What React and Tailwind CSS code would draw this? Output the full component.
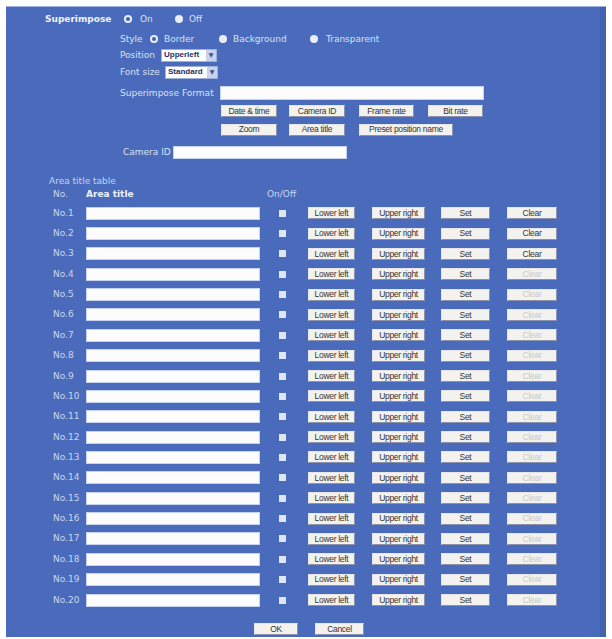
import React from 'react';

const font = { fontFamily: '"DejaVu Sans", Verdana, sans-serif' };
const btnFont = { fontFamily: '"Liberation Sans", Arial, sans-serif' };

const Radio = ({ checked }) => (
  <span className="flex h-[8px] w-[8px] shrink-0 items-center justify-center rounded-full bg-[#e9eefa]">
    {checked && <span className="h-[4px] w-[4px] rounded-full bg-[#3d5fae]" />}
  </span>
);

const Btn = ({ w, children, disabled, className = '' }) => (
  <button
    type="button"
    style={btnFont}
    className={`${w} ${className} flex h-[12px] shrink-0 items-center justify-center border border-[#e6e6e6] border-b-[#8a93ab] border-r-[#8a93ab] bg-[#f3f2ee] text-[8.5px] leading-none tracking-[-0.3px] ${
      disabled ? 'text-[#c9c9c9]' : 'text-[#333]'
    }`}
  >
    {children}
  </button>
);

const Select = ({ w, value }) => (
  <div className={`${w} flex h-[13px] shrink-0 items-center border border-[#9fb0d8] bg-white`}>
    <span style={btnFont} className="flex-1 overflow-hidden whitespace-nowrap pl-[2px] text-[8px] font-bold leading-none text-[#1d2f6b]">
      {value}
    </span>
    <span className="flex h-full w-[10px] items-center justify-center bg-[#c9d1ec] text-[6px] text-[#3b4f90]">▼</span>
  </div>
);

const Field = ({ w, h = 'h-[13px]' }) => (
  <div className={`${w} ${h} shrink-0 border border-[#c6d2ee] bg-[#fcfcfd]`} />
);

const AreaRow = ({ n }) => (
  <div className="flex h-[20.37px] items-center pl-[47px]">
    <span className="w-[33px] text-[9px] leading-none text-[#cad6f2]">No.{n}</span>
    <Field w="w-[174px]" />
    <span className="ml-[19px] h-[7px] w-[7px] shrink-0 bg-[#dfe6f6]" />
    <Btn w="w-[47px]" className="ml-[22px]">Lower left</Btn>
    <Btn w="w-[53px]" className="ml-[17px]">Upper right</Btn>
    <Btn w="w-[49px]" className="ml-[16px]">Set</Btn>
    <Btn w="w-[50px]" className="ml-[17px]" disabled={n > 3}>Clear</Btn>
  </div>
);

export default function App() {
  const rows = Array.from({ length: 20 }, (_, i) => i + 1);

  return (
    <div className="h-[639px] w-[612px] bg-white pl-[6px] pt-[6px]" style={font}>
      <div className="flex h-[631px] w-[600px] border-t border-t-[#9db0df] bg-[#4a6bbb]">
        <div className="flex-1 text-[9px] leading-none text-[#d8e1f5]">
          {/* superimpose on/off */}
          <div className="mt-[4px] flex h-[16px] items-center pl-[39px]">
            <span className="w-[79px] font-bold text-[#eef2fb]">Superimpose</span>
            <Radio checked />
            <span className="ml-[8px] w-[35px]">On</span>
            <Radio />
            <span className="ml-[6px]">Off</span>
          </div>

          {/* style */}
          <div className="mt-[4px] flex h-[16px] items-center pl-[114px]">
            <span className="w-[30px]">Style</span>
            <Radio checked />
            <span className="ml-[6px] w-[55px]">Border</span>
            <Radio />
            <span className="ml-[6px] w-[77px]">Background</span>
            <Radio />
            <span className="ml-[8px]">Transparent</span>
          </div>

          <div className="flex h-[16px] items-center pl-[114px]">
            <span className="w-[41px]">Position</span>
            <Select w="w-[56px]" value="Upperleft" />
          </div>

          <div className="mt-[1px] flex h-[16px] items-center pl-[114px]">
            <span className="w-[45px]">Font size</span>
            <Select w="w-[53px]" value="Standard" />
          </div>

          <div className="mt-[6px] flex h-[14px] items-center pl-[114px]">
            <span className="w-[100px]">Superimpose Format</span>
            <Field w="w-[264px]" h="h-[14px]" />
          </div>

          {/* format tokens */}
          <div className="mt-[5px] flex h-[12px] items-center pl-[215px]">
            <Btn w="w-[56px]">Date &amp; time</Btn>
            <Btn w="w-[56px]" className="ml-[12px]">Camera ID</Btn>
            <Btn w="w-[55px]" className="ml-[14px]">Frame rate</Btn>
            <Btn w="w-[55px]" className="ml-[14px]">Bit rate</Btn>
          </div>
          <div className="mt-[6px] flex h-[13px] items-center pl-[215px]">
            <Btn w="w-[56px]">Zoom</Btn>
            <Btn w="w-[56px]" className="ml-[12px]">Area title</Btn>
            <Btn w="w-[94px]" className="ml-[14px]">Preset position name</Btn>
          </div>

          <div className="mt-[10px] flex h-[13px] items-center pl-[117px]">
            <span className="w-[50px]">Camera ID</span>
            <Field w="w-[174px]" />
          </div>

          {/* area title table */}
          <div className="mt-[16px] flex h-[12px] items-center pl-[43px] text-[#c6d2f0]">Area title table</div>
          <div className="mt-[1px] flex h-[12px] items-center pl-[47px]">
            <span className="w-[33px] text-[#cad6f2]">No.</span>
            <span className="w-[181px] font-bold text-[#eef2fb]">Area title</span>
            <span className="text-[#cad6f2]">On/Off</span>
          </div>

          <div className="mt-[3px]">
            {rows.map((n) => (
              <AreaRow key={n} n={n} />
            ))}
          </div>

          <div className="mt-[13px] flex h-[12px] items-center pl-[248px]">
            <Btn w="w-[44px]">OK</Btn>
            <Btn w="w-[49px]" className="ml-[17px]">Cancel</Btn>
          </div>
        </div>
        <div className="w-[6px] bg-[#4262b0]" />
      </div>
    </div>
  );
}
